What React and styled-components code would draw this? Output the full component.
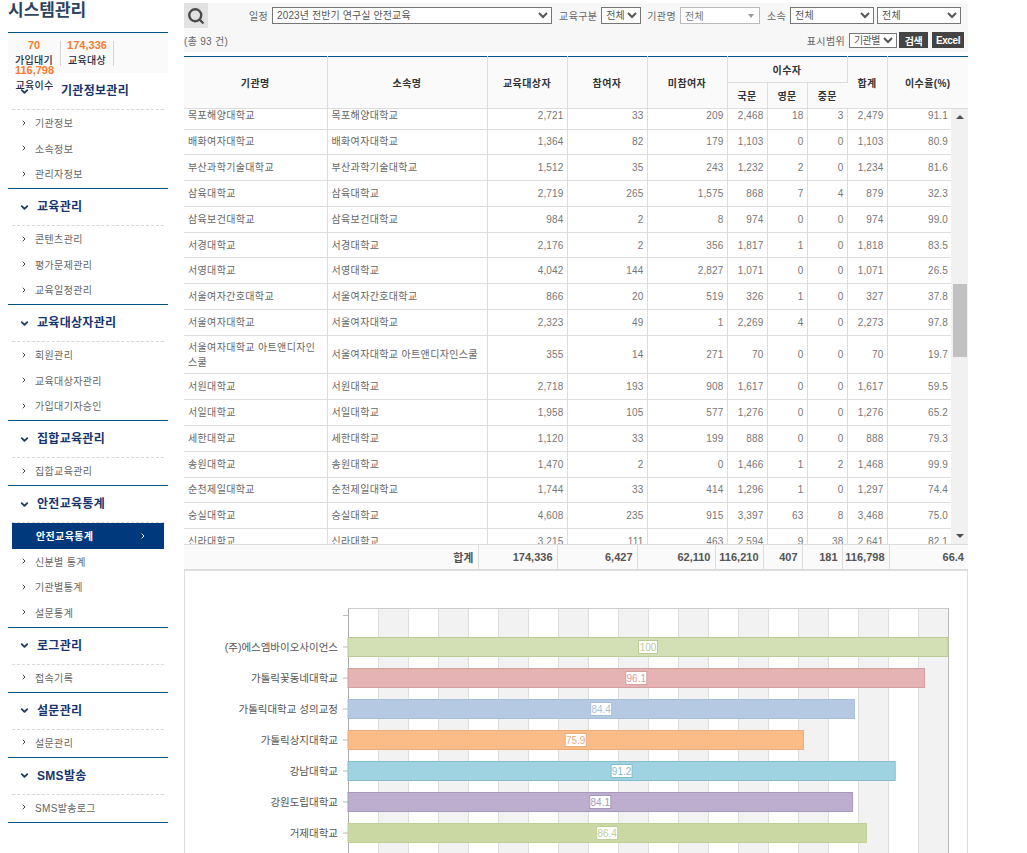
import React from "react";
import styled, { createGlobalStyle } from "styled-components";
import { ChevronDown, ChevronRight, Search } from "lucide-react";

const FONT = '"Liberation Sans", "Noto Sans CJK KR", sans-serif';

const GlobalStyle = createGlobalStyle`
  html, body {
    margin: 0;
    padding: 0;
    height: 853px;
    overflow: hidden;
    background: #fff;
  }
  body {
    font-family: ${FONT};
    font-size: 10px;
    color: #666;
  }
  * { box-sizing: border-box; }
`;

const Page = styled.div`
  display: flex;
  align-items: flex-start;
  gap: 16px;
  height: 853px;
  padding-left: 8px;
  overflow: hidden;
`;

const Side = styled.aside`
  width: 160px;
  flex: none;
`;

const SideTitle = styled.h1`
  margin: 0;
  height: 33px;
  padding-top: 1px;
  border-bottom: 1px solid #00508c;
  font-size: 17px;
  line-height: 20px;
  font-weight: 700;
  color: #2c4460;
`;

const Stats = styled.ul`
  display: flex;
  flex-wrap: wrap;
  align-content: flex-start;
  height: 40px;
  margin: 0;
  padding: 8px 2px 0 0;
  list-style: none;
  background: #fafafa;
`;

const Stat = styled.li`
  width: 53px;
  height: 25px;
  text-align: center;
  position: relative;
  z-index: 1;
  &:nth-child(1), &:nth-child(2) {
    border-right: 1px solid #d4d4d4;
  }
`;

const StatNum = styled.div`
  font-size: 11px;
  line-height: 8px;
  font-weight: 700;
  color: #ff7a2e;
`;

const StatLabel = styled.div`
  margin-top: 6px;
  font-size: 10px;
  line-height: 12px;
  letter-spacing: 0.3px;
  font-weight: 500;
  color: #1c2c44;
`;

const Group = styled.section`
  padding-bottom: 1.5px;
  border-bottom: 1px solid #00508c;
`;

const GroupHead = styled.h2`
  display: flex;
  align-items: center;
  height: 36px;
  margin: 0;
  padding-left: 11px;
  font-size: 12px;
  line-height: 36px;
  font-weight: 700;
  letter-spacing: 0.3px;
  color: #16346e;
  svg {
    flex: none;
    margin-right: ${(p) => (p.$first ? 31 : 7)}px;
  }
`;

const Dashed = styled.div`
  margin: 0 4px;
  border-top: 1px dashed #d8d8d8;
`;

const Item = styled.a`
  display: flex;
  align-items: center;
  height: 25.5px;
  margin: 0 4px;
  padding-left: ${(p) => (p.$active ? 24 : 8)}px;
  letter-spacing: 0.35px;
  background: ${(p) => (p.$active ? "#003a7d" : "transparent")};
  color: ${(p) => (p.$active ? "#fff" : "#666")};
  font-weight: ${(p) => (p.$active ? 700 : 400)};
  svg {
    flex: none;
    margin-right: 7px;
    color: #444;
  }
`;

const ActiveArrow = styled.span`
  display: flex;
  margin-left: auto;
  padding-right: 17px;
  svg {
    margin: 0;
    color: #fff;
  }
`;

const Main = styled.main`
  width: 784px;
  flex: none;
  padding-top: 3px;
`;

const Toolbar = styled.div`
  height: 49px;
  background: #f7f7f7;
`;

const ToolRow = styled.div`
  display: flex;
  align-items: center;
`;

const FilterRow = styled(ToolRow)`
  height: 25px;
`;

const SubRow = styled(ToolRow)`
  height: 24px;
  padding-right: 4px;
`;

const SearchToggle = styled.button`
  display: flex;
  align-items: center;
  justify-content: center;
  width: 24px;
  height: 25px;
  margin-right: 41px;
  padding: 0;
  border: 0;
  background: #e2e2e2;
  color: #4a4a4a;
`;

const Label = styled.label`
  margin: 0 4px 0 ${(p) => p.$gap || 0}px;
  letter-spacing: 0.35px;
  color: #666;
  white-space: nowrap;
`;

const Select = styled.select`
  width: ${(p) => p.$w}px;
  height: ${(p) => p.$h || 17}px;
  margin-left: ${(p) => p.$gap || 0}px;
  padding: 0;
  border: 1px solid #767676;
  border-radius: 0;
  background-color: #fff;
  font-family: ${FONT};
  font-size: 10px;
  letter-spacing: ${(p) => (p.$tight ? -0.6 : 0.1)}px;
  color: #555;
`;

const Combo = styled.div`
  display: flex;
  align-items: center;
  justify-content: space-between;
  width: 80px;
  height: 17px;
  padding: 0 5px 0 4px;
  border: 1px solid #bbb;
  background: #fff;
  letter-spacing: 0.35px;
  color: #777;
  &::after {
    content: "";
    border-left: 3px solid transparent;
    border-right: 3px solid transparent;
    border-top: 4px solid #999;
  }
`;

const Count = styled.span`
  letter-spacing: 0.3px;
  color: #666;
  margin-right: auto;
`;

const DarkButton = styled.button`
  width: ${(p) => p.$w}px;
  height: 16px;
  margin-left: ${(p) => p.$gap}px;
  padding: 0;
  border: 0;
  background: #444;
  color: #fff;
  font-family: ${FONT};
  font-size: 10px;
  font-weight: 700;
  letter-spacing: -0.4px;
`;

const Grid = styled.table`
  width: 100%;
  table-layout: fixed;
  border-collapse: collapse;
  th, td {
    border-right: 1px solid #ddd;
    border-bottom: 1px solid #ddd;
    padding: 0;
  }
  th:last-child, td:last-child {
    border-right: 0;
  }
`;

const HeadTable = styled(Grid)`
  margin-top: 4px;
  border-top: 1px solid #00508c;
  background: #fafafa;
  th {
    height: 26px;
    font-size: 10px;
    font-weight: 700;
    letter-spacing: 0.4px;
    color: #333;
  }
`;

const BodyFrame = styled.div`
  display: flex;
  height: 435px;
`;

const BodyClip = styled.div`
  flex: 1;
  min-width: 0;
  overflow: hidden;
`;

const BodyTable = styled(Grid)`
  margin-top: -5.8px;
  td {
    height: 25.8px;
    color: #777;
  }
`;

const TextCell = styled.td`
  padding: 3.75px 4px !important;
  line-height: 15px;
  letter-spacing: 0.35px;
  color: #666 !important;
`;

const NumCell = styled.td`
  padding: 0 3px 0 0 !important;
  text-align: right;
  font-size: 10px;
  letter-spacing: 0.15px;
`;

const Scrollbar = styled.div`
  position: relative;
  flex: none;
  width: 17px;
  background: #f1f1f1;
`;

const ScrollArrow = styled.span`
  position: absolute;
  left: 5px;
  ${(p) => (p.$down ? "bottom: 6px;" : "top: 6px;")}
  border-left: 4px solid transparent;
  border-right: 4px solid transparent;
  ${(p) => (p.$down ? "border-top" : "border-bottom")}: 4px solid #505050;
`;

const ScrollThumb = styled.div`
  position: absolute;
  left: 2px;
  right: 1px;
  top: 175px;
  height: 73px;
  background: #c1c1c1;
`;

const FootTable = styled(Grid)`
  background: #fafafa;
  border-top: 1px solid #ddd;
  border-bottom: 2px solid #ddd;
  td {
    height: 25px;
    padding-right: 4px;
    text-align: right;
    font-size: 11px;
    font-weight: 700;
    color: #555;
    border-bottom: 0;
  }
`;

const ChartPanel = styled.div`
  height: 291px;
  border-left: 1px solid #ddd;
  border-right: 1px solid #ddd;
`;

const columns = [143, 160, 80, 80, 80, 40, 40, 40, 40, 81];
const bodyColumns = [143, 160, 80, 80, 80, 40, 40, 40, 40, 64];
const footColumns = [294, 79, 80, 78, 48, 39, 40, 47, 79];

const rows = [
  ["목포해양대학교", "목포해양대학교", "2,721", "33", "209", "2,468", "18", "3", "2,479", "91.1"],
  ["배화여자대학교", "배화여자대학교", "1,364", "82", "179", "1,103", "0", "0", "1,103", "80.9"],
  ["부산과학기술대학교", "부산과학기술대학교", "1,512", "35", "243", "1,232", "2", "0", "1,234", "81.6"],
  ["삼육대학교", "삼육대학교", "2,719", "265", "1,575", "868", "7", "4", "879", "32.3"],
  ["삼육보건대학교", "삼육보건대학교", "984", "2", "8", "974", "0", "0", "974", "99.0"],
  ["서경대학교", "서경대학교", "2,176", "2", "356", "1,817", "1", "0", "1,818", "83.5"],
  ["서영대학교", "서영대학교", "4,042", "144", "2,827", "1,071", "0", "0", "1,071", "26.5"],
  ["서울여자간호대학교", "서울여자간호대학교", "866", "20", "519", "326", "1", "0", "327", "37.8"],
  ["서울여자대학교", "서울여자대학교", "2,323", "49", "1", "2,269", "4", "0", "2,273", "97.8"],
  ["서울여자대학교 아트앤디자인스쿨", "서울여자대학교 아트앤디자인스쿨", "355", "14", "271", "70", "0", "0", "70", "19.7"],
  ["서원대학교", "서원대학교", "2,718", "193", "908", "1,617", "0", "0", "1,617", "59.5"],
  ["서일대학교", "서일대학교", "1,958", "105", "577", "1,276", "0", "0", "1,276", "65.2"],
  ["세한대학교", "세한대학교", "1,120", "33", "199", "888", "0", "0", "888", "79.3"],
  ["송원대학교", "송원대학교", "1,470", "2", "0", "1,466", "1", "2", "1,468", "99.9"],
  ["순천제일대학교", "순천제일대학교", "1,744", "33", "414", "1,296", "1", "0", "1,297", "74.4"],
  ["숭실대학교", "숭실대학교", "4,608", "235", "915", "3,397", "63", "8", "3,468", "75.0"],
  ["신라대학교", "신라대학교", "3,215", "111", "463", "2,594", "9", "38", "2,641", "82.1"],
];

const totals = ["174,336", "6,427", "62,110", "116,210", "407", "181", "116,798", "66.4"];

const menu = [
  { title: "기관정보관리", items: ["기관정보", "소속정보", "관리자정보"] },
  { title: "교육관리", items: ["콘텐츠관리", "평가문제관리", "교육일정관리"] },
  { title: "교육대상자관리", items: ["회원관리", "교육대상자관리", "가입대기자승인"] },
  { title: "집합교육관리", items: ["집합교육관리"] },
  { title: "안전교육통계", items: ["안전교육통계", "신분별 통계", "기관별통계", "설문통계"], active: 0 },
  { title: "로그관리", items: ["접속기록"] },
  { title: "설문관리", items: ["설문관리"] },
  { title: "SMS발송", items: ["SMS발송로그"] },
];

const bars = [
  { name: "(주)에스엠바이오사이언스", value: 100, fill: "#d3e0b5", line: "#b9ca95" },
  { name: "가톨릭꽃동네대학교", value: 96.1, fill: "#e5b3b3", line: "#d3a0a0" },
  { name: "가톨릭대학교 성의교정", value: 84.4, fill: "#b5cae2", line: "#a9bed8" },
  { name: "가톨릭상지대학교", value: 75.9, fill: "#fbbc87", line: "#e9ab7a" },
  { name: "강남대학교", value: 91.2, fill: "#a0d3e2", line: "#86bdcc" },
  { name: "강원도립대학교", value: 84.1, fill: "#bdadcf", line: "#a898bc" },
  { name: "거제대학교", value: 86.4, fill: "#cad9a3", line: "#bfcf98" },
];

function Cols({ widths }) {
  return (
    <colgroup>
      {widths.map((w, i) => (
        <col key={i} style={{ width: w }} />
      ))}
    </colgroup>
  );
}

function Sidebar() {
  return (
    <Side>
      <SideTitle>시스템관리</SideTitle>
      <Stats>
        <Stat>
          <StatNum>70</StatNum>
          <StatLabel>가입대기</StatLabel>
        </Stat>
        <Stat>
          <StatNum>174,336</StatNum>
          <StatLabel>교육대상</StatLabel>
        </Stat>
        <Stat>
          <StatNum>116,798</StatNum>
          <StatLabel>교육이수</StatLabel>
        </Stat>
      </Stats>
      {menu.map((group, g) => (
        <Group key={group.title}>
          <GroupHead $first={g === 0}>
            <ChevronDown size={11} strokeWidth={4} color="#1f3a5f" />
            {group.title}
          </GroupHead>
          <Dashed />
          {group.items.map((item, i) =>
            group.active === i ? (
              <Item key={item} $active>
                {item}
                <ActiveArrow>
                  <ChevronRight size={8} strokeWidth={3} />
                </ActiveArrow>
              </Item>
            ) : (
              <Item key={item}>
                <ChevronRight size={8} strokeWidth={3} />
                {item}
              </Item>
            )
          )}
        </Group>
      ))}
    </Side>
  );
}

function Filters() {
  return (
    <Toolbar>
      <FilterRow>
        <SearchToggle>
          <Search size={18} strokeWidth={3.2} />
        </SearchToggle>
        <Label>일정</Label>
        <Select $w={280}>
          <option>2023년 전반기 연구실 안전교육</option>
        </Select>
        <Label $gap={7}>교육구분</Label>
        <Select $w={40}>
          <option>전체</option>
        </Select>
        <Label $gap={6}>기관명</Label>
        <Combo>전체</Combo>
        <Label $gap={7}>소속</Label>
        <Select $w={84}>
          <option>전체</option>
        </Select>
        <Select $w={84} $gap={3}>
          <option>전체</option>
        </Select>
      </FilterRow>
      <SubRow>
        <Count>(총 93 건)</Count>
        <Label>표시범위</Label>
        <Select $w={48} $h={15} $tight>
          <option>기관별</option>
        </Select>
        <DarkButton $w={29} $gap={2}>검색</DarkButton>
        <DarkButton $w={32} $gap={4}>Excel</DarkButton>
      </SubRow>
    </Toolbar>
  );
}

function ResultTable() {
  return (
    <>
      <HeadTable>
        <Cols widths={columns} />
        <thead>
          <tr>
            <th rowSpan={2}>기관명</th>
            <th rowSpan={2}>소속명</th>
            <th rowSpan={2}>교육대상자</th>
            <th rowSpan={2}>참여자</th>
            <th rowSpan={2}>미참여자</th>
            <th colSpan={3}>이수자</th>
            <th rowSpan={2}>합계</th>
            <th rowSpan={2}>이수율(%)</th>
          </tr>
          <tr>
            <th>국문</th>
            <th>영문</th>
            <th>중문</th>
          </tr>
        </thead>
      </HeadTable>
      <BodyFrame>
        <BodyClip>
          <BodyTable>
            <Cols widths={bodyColumns} />
            <tbody>
              {rows.map((row, r) => (
                <tr key={r}>
                  {row.map((cell, c) =>
                    c < 2 ? (
                      <TextCell key={c}>{cell}</TextCell>
                    ) : (
                      <NumCell key={c}>{cell}</NumCell>
                    )
                  )}
                </tr>
              ))}
            </tbody>
          </BodyTable>
        </BodyClip>
        <Scrollbar>
          <ScrollArrow />
          <ScrollThumb />
          <ScrollArrow $down />
        </Scrollbar>
      </BodyFrame>
      <FootTable>
        <Cols widths={footColumns} />
        <tbody>
          <tr>
            <td>합계</td>
            {totals.map((t, i) => (
              <td key={i}>{t}</td>
            ))}
          </tr>
        </tbody>
      </FootTable>
    </>
  );
}

// plot starts at x=163 inside the panel, 30px per band, 6px per percent
function Chart() {
  const plotX = 163;
  const plotTop = 37;
  const bands = Array.from({ length: 20 }, (_, i) => i);
  return (
    <ChartPanel>
      <svg width="782" height="291" style={{ display: "block" }}>
        {bands.map((i) => (
          <rect
            key={i}
            x={plotX + i * 30}
            y={plotTop}
            width="30"
            height="254"
            fill={i % 2 ? "#f2f2f2" : "#fff"}
          />
        ))}
        {bands.map((i) => (
          <line
            key={i}
            x1={plotX + i * 30 + 0.5}
            x2={plotX + i * 30 + 0.5}
            y1={plotTop}
            y2="291"
            stroke={i === 0 ? "#aaa" : "#ddd"}
          />
        ))}
        <line x1={plotX} x2={plotX + 600} y1={plotTop + 0.5} y2={plotTop + 0.5} stroke="#ccc" />
        <line x1={plotX + 600.5} x2={plotX + 600.5} y1={plotTop} y2="291" stroke="#bbb" />
        <line x1={plotX - 5} x2={plotX} y1={plotTop + 7.5} y2={plotTop + 7.5} stroke="#bbb" />
        {bars.map((bar, i) => {
          const y = 66.5 + i * 31;
          const w = bar.value * 6;
          const labelW = String(bar.value).length > 3 ? 21 : 19;
          return (
            <g key={bar.name}>
              <line x1={plotX - 5} x2={plotX} y1={y + 9.5} y2={y + 9.5} stroke="#bbb" />
              <text
                x={plotX - 10}
                y={y + 13}
                textAnchor="end"
                fontSize="10.5"
                fontFamily={FONT}
                fill="#555"
              >
                {bar.name}
              </text>
              <rect x={plotX} y={y} width={w} height="19" fill={bar.fill} stroke={bar.line} />
              <rect
                x={plotX + w / 2 - labelW / 2}
                y={y + 3}
                width={labelW}
                height="13"
                fill="#fff"
                stroke={bar.line}
              />
              <text
                x={plotX + w / 2}
                y={y + 13}
                textAnchor="middle"
                fontSize="10"
                fontFamily={FONT}
                fill={bar.line}
              >
                {bar.value}
              </text>
            </g>
          );
        })}
      </svg>
    </ChartPanel>
  );
}

export default function App() {
  return (
    <>
      <GlobalStyle />
      <Page>
        <Sidebar />
        <Main>
          <Filters />
          <ResultTable />
          <Chart />
        </Main>
      </Page>
    </>
  );
}
